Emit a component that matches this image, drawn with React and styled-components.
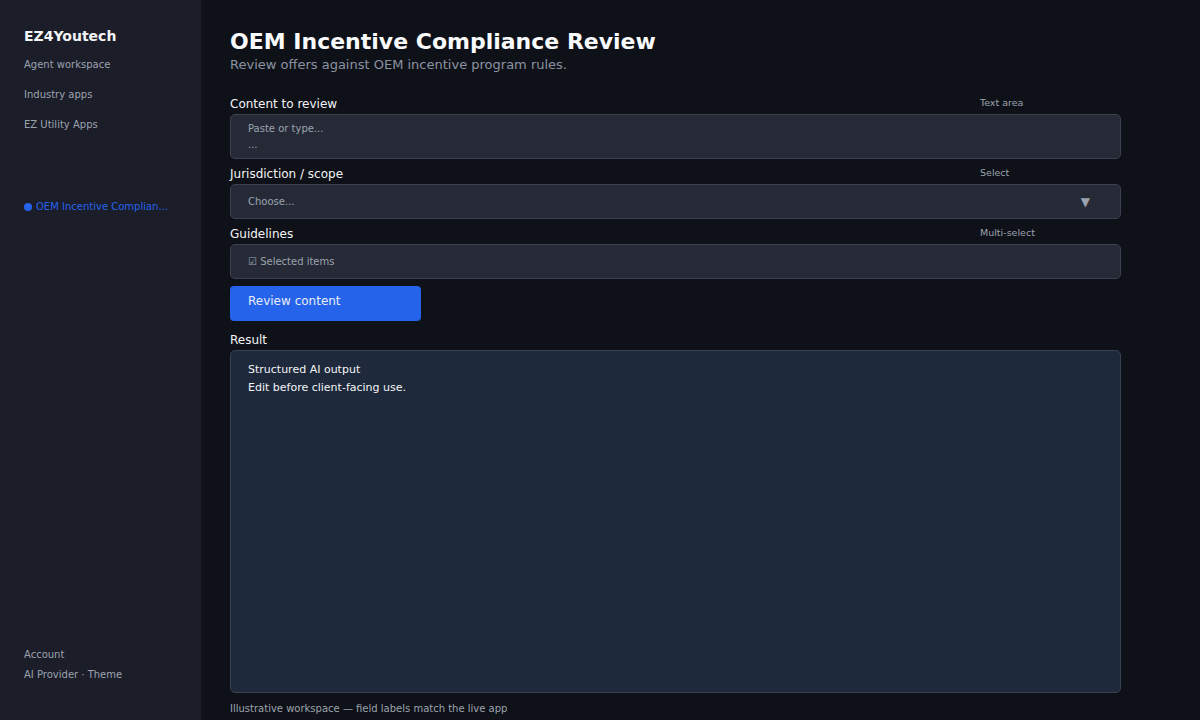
import styled, { createGlobalStyle } from "styled-components";

const GlobalStyle = createGlobalStyle`
  html, body {
    margin: 0;
    padding: 0;
    background: #0f1118;
  }
  body {
    font-family: "DejaVu Sans", "Liberation Sans", sans-serif;
  }
  * {
    box-sizing: border-box;
  }
`;

const Shell = styled.div`
  display: flex;
  width: 1200px;
  height: 720px;
  overflow: hidden;
  background: #0f1118;
`;

const Sidebar = styled.aside`
  width: 201px;
  flex-shrink: 0;
  background: #1b1d29;
  display: flex;
  flex-direction: column;
  padding: 27px 0 39px 24px;
`;

const Brand = styled.div`
  font-size: 14px;
  font-weight: bold;
  color: #f3f4f6;
  line-height: 18px;
  margin-bottom: 14px;
`;

const NavItem = styled.div`
  font-size: 10px;
  line-height: 12px;
  color: ${(p) => (p.active ? "#2563eb" : "#9ca3af")};
  margin-bottom: 18px;
  white-space: nowrap;
`;

const ActiveGroup = styled.div`
  margin-top: 52px;
`;

const Dot = styled.span`
  display: inline-block;
  width: 8px;
  height: 8px;
  border-radius: 50%;
  background: #2563eb;
  margin-right: 4px;
  vertical-align: -1px;
`;

const SideFooter = styled.div`
  margin-top: auto;
  display: flex;
  flex-direction: column;
  gap: 8px;
`;

const FooterLink = styled.div`
  font-size: 10px;
  line-height: 12px;
  color: #9ca3af;
`;

const Main = styled.main`
  flex: 1;
  padding: 29px 0 0 29px;
  display: flex;
  flex-direction: column;
`;

const Content = styled.div`
  width: 891px;
  display: flex;
  flex-direction: column;
`;

const Title = styled.h1`
  margin: 0;
  font-size: 22px;
  line-height: 26px;
  font-weight: bold;
  color: #f9fafb;
`;

const Subtitle = styled.p`
  margin: 0 0 22px;
  font-size: 13px;
  line-height: 20px;
  color: #8b93a3;
`;

const Field = styled.div`
  display: flex;
  flex-direction: column;
  margin-bottom: ${(p) => (p.tight ? 7 : 8)}px;
`;

const LabelRow = styled.div`
  display: grid;
  grid-template-columns: 1fr 141px;
  align-items: center;
  margin-bottom: 3px;
`;

const Label = styled.label`
  font-size: 12px;
  line-height: 14px;
  color: #f3f4f6;
`;

const Hint = styled.span`
  font-size: 9.5px;
  color: #9ca3af;
  margin-top: -3px;
`;

const Box = styled.div`
  height: ${(p) => p.h}px;
  background: #252a36;
  border: 1px solid #3b4150;
  border-radius: 5px;
  padding: 0 17px;
  font-size: 10px;
  color: #9ca3af;
  display: flex;
  align-items: center;
  justify-content: space-between;
`;

const TextBox = styled(Box)`
  flex-direction: column;
  align-items: flex-start;
  justify-content: flex-start;
  padding-top: 6px;
  line-height: 16px;
`;

const Arrow = styled.span`
  font-size: 12px;
  color: #9ca3af;
  margin-right: 13px;
`;

const Button = styled.button`
  align-self: flex-start;
  width: 191px;
  height: 35px;
  background: #2563eb;
  border: none;
  border-radius: 4px;
  padding: 0 18px 6px;
  text-align: left;
  font-family: inherit;
  font-size: 12px;
  line-height: 14px;
  color: #e8edf7;
  margin-bottom: 12px;
`;

const ResultBox = styled.div`
  height: 343px;
  background: #1e293b;
  border: 1px solid #364152;
  border-radius: 5px;
  padding: 10px 17px;
  font-size: 11px;
  line-height: 18px;
  color: #f3f4f6;
`;

const Note = styled.div`
  margin-top: 1px;
  font-size: 10px;
  line-height: 14px;
  color: #9ca3af;
`;

const navItems = ["Agent workspace", "Industry apps", "EZ Utility Apps"];

export default function App() {
  return (
    <Shell>
      <GlobalStyle />
      <Sidebar>
        <Brand>EZ4Youtech</Brand>
        {navItems.map((n) => (
          <NavItem key={n}>{n}</NavItem>
        ))}
        <ActiveGroup>
          <NavItem active>
            <Dot />
            OEM Incentive Complian...
          </NavItem>
        </ActiveGroup>
        <SideFooter>
          <FooterLink>Account</FooterLink>
          <FooterLink>AI Provider · Theme</FooterLink>
        </SideFooter>
      </Sidebar>
      <Main>
        <Content>
          <Title>OEM Incentive Compliance Review</Title>
          <Subtitle>Review offers against OEM incentive program rules.</Subtitle>

          <Field>
            <LabelRow>
              <Label>Content to review</Label>
              <Hint>Text area</Hint>
            </LabelRow>
            <TextBox h={45}>
              <span>Paste or type...</span>
              <span>...</span>
            </TextBox>
          </Field>

          <Field>
            <LabelRow>
              <Label>Jurisdiction / scope</Label>
              <Hint>Select</Hint>
            </LabelRow>
            <Box h={35}>
              <span>Choose...</span>
              <Arrow>▼</Arrow>
            </Box>
          </Field>

          <Field tight>
            <LabelRow>
              <Label>Guidelines</Label>
              <Hint>Multi-select</Hint>
            </LabelRow>
            <Box h={35}>
              <span>☑ Selected items</span>
            </Box>
          </Field>

          <Button>Review content</Button>

          <Field>
            <LabelRow>
              <Label>Result</Label>
            </LabelRow>
            <ResultBox>
              <div>Structured AI output</div>
              <div>Edit before client-facing use.</div>
            </ResultBox>
          </Field>
          <Note>Illustrative workspace — field labels match the live app</Note>
        </Content>
      </Main>
    </Shell>
  );
}
